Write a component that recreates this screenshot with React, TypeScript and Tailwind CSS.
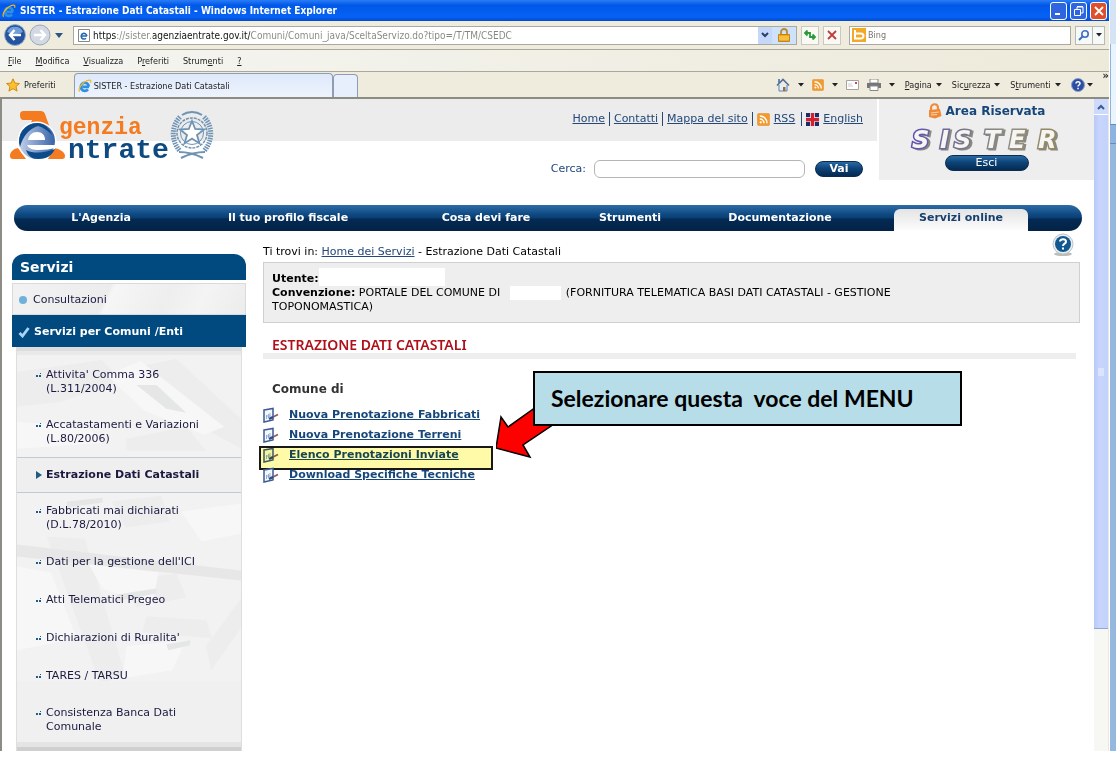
import type { ReactNode } from 'react'
import clsx from 'clsx'

const MENU = [
  ['', 'F', 'ile'],
  ['', 'M', 'odifica'],
  ['', 'V', 'isualizza'],
  ['P', 'r', 'eferiti'],
  ['Strum', 'e', 'nti'],
  ['', '?', ''],
]

const NAV = [
  { label: "L'Agenzia", className: '' },
  { label: 'Il tuo profilo fiscale', className: '' },
  { label: 'Cosa devi fare', className: '' },
  { label: 'Strumenti', className: '' },
  { label: 'Documentazione', className: 'pr-2.5' },
]

const SERVICES = [
  { lines: ["Attivita' Comma 336", '(L.311/2004)'] },
  { lines: ['Accatastamenti e Variazioni', '(L.80/2006)'] },
  { lines: ['Estrazione Dati Catastali'], active: true },
  { lines: ['Fabbricati mai dichiarati', '(D.L.78/2010)'] },
  { lines: ["Dati per la gestione dell'ICI"] },
  { lines: ['Atti Telematici Pregeo'] },
  { lines: ["Dichiarazioni di Ruralita'"] },
  { lines: ['TARES / TARSU'] },
  { lines: ['Consistenza Banca Dati', 'Comunale'] },
]

const ACTIONS = [
  { label: 'Nuova Prenotazione Fabbricati' },
  { label: 'Nuova Prenotazione Terreni' },
  { label: 'Elenco Prenotazioni Inviate', highlighted: true },
  { label: 'Download Specifiche Tecniche' },
]

function IeIcon({ className }: { className?: string }) {
  return (
    <svg viewBox="0 0 16 16" className={className} fill="none" aria-hidden="true">
      <path d="M12.6 9H5M12.4 8.6a4.6 4.6 0 1 0-1 3.2" stroke="#2f8fe0" strokeWidth="3" />
      <path d="M2 14.5C-.5 12 4 4.500 10 2c4-1.600 5.500-.5 4.300 2.300" stroke="#f3b81c" strokeWidth="1.400" />
    </svg>
  )
}

function RssIcon({ className }: { className?: string }) {
  return (
    <svg viewBox="0 0 14 14" className={className} fill="none" aria-hidden="true">
      <rect x=".5" y=".5" width="13" height="13" rx="1.500" fill="#f39a2e" stroke="#e9a04e" />
      <path d="M3 6.500A4.500 4.500 0 0 1 7.500 11M3 3.200A7.800 7.800 0 0 1 10.800 11" stroke="#fff" strokeWidth="1.600" />
      <circle cx="4" cy="10" r="1.200" fill="#fff" />
    </svg>
  )
}

function Caret() {
  return (
    <svg viewBox="0 0 6 4" className="h-1 w-1.5 shrink-0" aria-hidden="true">
      <path d="M0 0h6L3 3.500z" fill="#222" />
    </svg>
  )
}

function HelpIcon({ className }: { className?: string }) {
  return (
    <svg viewBox="0 0 22 24" className={className} aria-hidden="true">
      <ellipse cx="11" cy="21" rx="9" ry="2" fill="#bdbdb5" />
      <circle cx="11" cy="11" r="10" fill="#e9eef3" stroke="#b9c4ce" />
      <circle cx="11" cy="11" r="8" fill="#12588f" />
      <path d="M8 8.500C8 5.500 14 5.500 14 8.700c0 2-3 2-3 4.300M11 14.500v2" fill="none" stroke="#fff" strokeWidth="2" />
    </svg>
  )
}

function EditIcon() {
  return (
    <svg viewBox="0 0 16 16" className="size-4 shrink-0" fill="none" aria-hidden="true">
      <path d="M1 3l9-1.500v11.500l-9 2z" fill="#f4f8fc" stroke="#3c5a94" strokeWidth="1.500" />
      <path d="M3.500 8v4M5.500 7v4M3 9h4M7 6v4" stroke="#8fb0d0" />
      <path d="M7 11.500l8-4" stroke="#8b5a62" strokeWidth="1.800" />
      <path d="M6 12l4-2" stroke="#2b4b8d" strokeWidth="2.200" />
    </svg>
  )
}

function TitleBar() {
  const base = 'flex h-[18px] w-[17px] items-center justify-center rounded-[3px] border border-white'
  return (
    <div className="flex h-[21px] items-center bg-[linear-gradient(#2b7cf5,#0058e8_25%,#0662f6_80%,#0249cf)] pl-0.5 pr-0.5">
      <IeIcon className="size-3.5" />
      <h1 className="ml-1 flex-1 truncate text-[10px] font-bold text-white">
        SISTER - Estrazione Dati Catastali - Windows Internet Explorer
      </h1>
      <div className="flex gap-[3px]">
        <button aria-label="Riduci a icona" className={clsx(base, 'bg-[#2f66e0]')}>
          <svg viewBox="0 0 12 12" className="size-3"><path d="M2 9h5" stroke="#fff" strokeWidth="2" /></svg>
        </button>
        <button aria-label="Ripristina" className={clsx(base, 'bg-[#2f66e0]')}>
          <svg viewBox="0 0 12 12" className="size-3" fill="none" stroke="#fff">
            <path d="M4 4V2h6v6H8M4 1.500h6" />
            <path d="M1.500 4.500h6v6h-6z" />
          </svg>
        </button>
        <button aria-label="Chiudi" className={clsx(base, 'bg-[#df4f2b]')}>
          <svg viewBox="0 0 12 12" className="size-3"><path d="M2 2l8 8M10 2l-8 8" stroke="#fff" strokeWidth="1.800" /></svg>
        </button>
      </div>
    </div>
  )
}

function AddressBar() {
  const small = 'flex h-[19px] w-[18px] items-center justify-center border border-[#c9c9c4] bg-[#faf9f4]'
  return (
    <div className="flex h-[29px] items-center border-b border-[#aaa89c] pl-1 pr-1">
      <button aria-label="Indietro">
        <svg viewBox="0 0 22 22" className="size-[22px]">
          <circle cx="11" cy="11" r="10.500" fill="#24539f" stroke="#9bb0cc" />
          <path d="M3 8a8.500 8 0 0 1 16 0q-8 4-16 0z" fill="#6f9fd8" />
          <path d="M17 11H6M10.500 6L6 11l4.500 5" fill="none" stroke="#fff" strokeWidth="2.500" />
        </svg>
      </button>
      <button aria-label="Avanti" className="ml-[3px]">
        <svg viewBox="0 0 22 22" className="size-[22px]">
          <circle cx="11" cy="11" r="10" fill="#d3d9e3" stroke="#9ba8ba" />
          <path d="M5 11h11M11.500 6l4.500 5-4.500 5" fill="none" stroke="#fff" strokeWidth="2.500" />
        </svg>
      </button>
      <button aria-label="Pagine recenti" className="ml-1 mr-2.5">
        <svg viewBox="0 0 8 5" className="h-[5px] w-2"><path d="M0 0h8L4 5z" fill="#2b5687" /></svg>
      </button>
      <div className="flex h-[19px] flex-1 items-center border border-[#a9a9a2] bg-white pl-1">
        <svg viewBox="0 0 12 13" className="h-[13px] w-3" aria-hidden="true">
          <path d="M.5.5h11v12H.5z" fill="#fff" stroke="#888" />
          <path d="M9 7H3.500M8.800 7a2.800 2.800 0 1 0-.8 2.200" fill="none" stroke="#2469b3" strokeWidth="1.600" />
        </svg>
        <input
          aria-label="Indirizzo"
          className="ml-[3px] h-full min-w-0 flex-1 bg-[linear-gradient(90deg,#111_23px,#85857f_23px,#85857f_60px,#111_60px,#111_157px,#85857f_157px)] bg-clip-text text-[10px] text-transparent outline-none"
          defaultValue="https://sister.agenziaentrate.gov.it/Comuni/Comuni_java/SceltaServizo.do?tipo=/T/TM/CSEDC"
        />
        <button aria-label="Mostra indirizzi" className="flex h-full w-3.5 items-center justify-center bg-[#c6d8fa]">
          <svg viewBox="0 0 8 6" className="h-1.5 w-2"><path d="M1 1l3 3 3-3" fill="none" stroke="#28406b" strokeWidth="2" /></svg>
        </button>
        <button aria-label="Rapporto di protezione" className="flex h-full w-6 items-center justify-center bg-[#cfe2fb]">
          <svg viewBox="0 0 12 14" className="h-3.5 w-3">
            <path d="M3 7V4a3 3 0 0 1 6 0v3" fill="none" stroke="#c08a2a" strokeWidth="1.800" />
            <path d="M.5 6.500h11v7H.5z" fill="#eda81b" stroke="#c58416" />
            <path d="M1 9h10M1 11h10" stroke="#ffd66a" />
          </svg>
        </button>
      </div>
      <div className="ml-1 flex gap-1">
        <button aria-label="Aggiorna" className={small}>
          <svg viewBox="0 0 14 14" className="size-3.5" fill="none" stroke="#2b9a3b" strokeWidth="1.800">
            <path d="M7 8V5H2M4.500 2.500L2 5l2.500 2.500M7 6v3h5M9.500 6.500L12 9l-2.500 2.500" />
          </svg>
        </button>
        <button aria-label="Interrompi" className={small}>
          <svg viewBox="0 0 12 12" className="size-3"><path d="M2 2l8 8M10 2l-8 8" stroke="#c23b3b" strokeWidth="1.800" /></svg>
        </button>
      </div>
      <div className="ml-2 mr-1 flex h-[19px] w-[222px] items-center border border-[#a9a9a2] bg-white pl-0.5">
        <svg viewBox="0 0 14 14" className="size-3.5" aria-hidden="true">
          <path d="M0 0h14v14H0z" fill="#f2a929" />
          <path d="M3 2v8.500h6a2.500 2.500 0 0 0 0-5H3" fill="none" stroke="#fff" strokeWidth="2" />
        </svg>
        <input aria-label="Cerca con Bing" placeholder="Bing" className="ml-0.5 min-w-0 flex-1 text-[9px] outline-none placeholder:text-[#77756c]" />
      </div>
      <div className="flex h-[19px] border border-[#b9b9b4] bg-[#f7f8f8]">
        <button aria-label="Cerca" className="flex w-4 items-center justify-center">
          <svg viewBox="0 0 12 12" className="size-3" fill="none" stroke="#3e6fc0" strokeWidth="1.600">
            <circle cx="7" cy="5" r="3.200" />
            <path d="M4.500 7.500L1 11" strokeWidth="2" />
          </svg>
        </button>
        <button aria-label="Opzioni di ricerca" className="flex w-3 items-center justify-center border-l border-[#b9b9b4]">
          <Caret />
        </button>
      </div>
    </div>
  )
}

function Tool({ label, children }: { label: string; children: ReactNode }) {
  return (
    <button aria-label={label} className="flex items-center gap-2">
      {children}
    </button>
  )
}

function TabBar() {
  return (
    <div className="flex h-[27px] items-center border-b-2 border-[#8c8b84] pl-1.5">
      <button className="flex items-center gap-1">
        <svg viewBox="0 0 14 14" className="size-3.5" aria-hidden="true">
          <path d="M7 .8l1.900 4.300 4.600.4-3.500 3 1.100 4.600L7 10.700l-4.100 2.400L4 8.500l-3.500-3 4.600-.4z" fill="#fbc02d" stroke="#d18b12" />
        </svg>
        Preferiti
      </button>
      <div className="ml-[18px] flex h-full items-end">
        <button className="flex h-6 w-[259px] items-center gap-0.5 rounded-t-sm border border-b-0 border-[#8e9db5] bg-[linear-gradient(#dde8fa,#eef4fd)] pl-[3px]">
          <IeIcon className="size-3.5" />
          SISTER - Estrazione Dati Catastali
        </button>
        <button aria-label="Nuova scheda" className="h-[23px] w-[25px] rounded-t-sm border border-b-0 border-[#8e9db5] bg-[#e8effc]" />
      </div>
      <div className="ml-auto flex h-full items-center gap-2.5">
        <div className="flex items-center gap-2">
          <Tool label="Pagina iniziale">
            <svg viewBox="0 0 14 14" className="size-3.5" fill="none">
              <path d="M3 7v6h8V7" fill="#e6edf7" stroke="#5b82b8" />
              <path d="M1 7.500l6-6 6 6M3 1v4" stroke="#4f6f9c" strokeWidth="1.600" />
              <path d="M7 9h2.500v4H7z" fill="#9c6b3c" />
            </svg>
            <Caret />
          </Tool>
          <Tool label="Feed">
            <RssIcon className="size-3" />
            <Caret />
          </Tool>
          <Tool label="Posta">
            <svg viewBox="0 0 13 10" className="h-2.5 w-[13px]">
              <path d="M.5.5h12v9H.5z" fill="#fff" stroke="#a4a49e" />
              <path d="M9 2h2v2H9z" fill="#c45" />
              <path d="M2 4h4M2 6h5" stroke="#ccc" />
            </svg>
          </Tool>
          <Tool label="Stampa">
            <svg viewBox="0 0 14 12" className="h-3 w-3.5">
              <path d="M3 0h8v4H3z" fill="#fff" stroke="#888" />
              <path d="M0 4h14v5H0z" fill="#74767c" />
              <path d="M3 7h8v4.500H3z" fill="#fff" stroke="#888" />
            </svg>
            <Caret />
          </Tool>
        </div>
        <button className="flex items-center gap-1"><span><u>P</u>agina</span><Caret /></button>
        <button className="flex items-center gap-1"><span>Sic<u>u</u>rezza</span><Caret /></button>
        <button className="flex items-center gap-1"><span>S<u>t</u>rumenti</span><Caret /></button>
        <button aria-label="Guida" className="flex items-center gap-0.5">
          <svg viewBox="0 0 14 14" className="size-3.5">
            <circle cx="7" cy="7" r="6.500" fill="#2c4fa3" stroke="#8ba0d0" />
            <path d="M5 5.500C5 3 9 3 9 5.500 9 7 7 7 7 8.500M7 9.700v1.500" fill="none" stroke="#fff" strokeWidth="1.500" />
          </svg>
          <Caret />
        </button>
        <button aria-label="Altri comandi" className="self-start text-[11px] leading-2 font-bold">»</button>
      </div>
    </div>
  )
}

function BrandLogo() {
  return (
    <svg viewBox="0 0 206 58" className="h-[58px] w-[206px]" role="img" aria-label="Agenzia Entrate">
      <defs>
        <linearGradient id="e-fill" x1="0" x2="1">
          <stop offset="0" stopColor="#c3d0ea" />
          <stop offset="1" stopColor="#3763a8" />
        </linearGradient>
      </defs>
      <path d="M10 5c0-3 1-4 4-4h16c4 0 5 2 6 6l4 11-20-2 2-6h-8c-3 0-4-2-4-5z" fill="#f47b20" />
      <path d="M8 38c-5 1-8 4-8 8 0 2 1 3 3 3h13zM44 38c6 1 11 4 11 8 0 2-1 3-3 3H38z" fill="#f47b20" />
      <circle cx="27" cy="31" r="19.500" fill="#fff" />
      <circle cx="27" cy="31" r="18" fill="url(#e-fill)" />
      <path d="M27 13a18 18 0 0 0-17 24c3-11 9-18 18-21 7 2 11 6 14 9-2-7-8-12-15-12z" fill="#0d4a89" />
      <path d="M18 30c1-5 4-8 9-8s8 3 8 8z" fill="#fff" />
      <path d="M16 40c8 4 19 3 29-1-3 7-9 10-17 10-6 0-10-3-12-9z" fill="#0d4a89" />
      <path d="M17 35c2 4 6 5 12 5 6 0 12-1 16-2v-3z" fill="#fff" />
      <g fontFamily="'Liberation Mono', monospace" fontWeight="bold">
        <text x="49" y="24" fill="#f47b20" fontSize="23">genzia</text>
        <text x="58" y="48" fill="#0d4a80" fontSize="28">ntrate</text>
      </g>
      <g fill="none" stroke="#6f93b3">
        <circle cx="182" cy="23" r="15" strokeWidth="1.500" strokeDasharray="3 1" />
        <circle cx="182" cy="23" r="11.500" />
        <path d="M170 7c-9 9-9 24 0 34M194 7c9 9 9 24 0 34" strokeWidth="5" strokeDasharray="1.500 1" />
        <path d="M169 42c8 0 18 3 24 6M195 42c-8 0-18 3-24 6M172 5c6-4 14-4 20 0" strokeWidth="2" />
        <path d="M182 11l3.200 8 8.800.500-7 5.500 2.500 8.500-7.500-5-7.500 5L177 25l-7-5.500 8.800-.5z" fill="#fff" strokeWidth="1.800" />
      </g>
    </svg>
  )
}

function SisterLogo() {
  return (
    <svg viewBox="0 0 156 36" className="h-9 w-[156px] drop-shadow-[2px_1px_0_#8a8880]" role="img" aria-label="SISTER">
      <defs>
        <linearGradient id="chrome" x1="0" x2="156" gradientUnits="userSpaceOnUse">
          <stop offset="0" stopColor="#5a50b8" />
          <stop offset=".35" stopColor="#77778c" />
          <stop offset=".65" stopColor="#918f84" />
          <stop offset="1" stopColor="#958756" />
        </linearGradient>
      </defs>
      <text
        x="3 31 45 75 100 129"
        y="29"
        fontFamily="'DejaVu Sans', sans-serif"
        fontSize="24"
        fontWeight="bold"
        fontStyle="italic"
        fill="#f7f5f2"
        stroke="url(#chrome)"
        strokeWidth="3"
        paintOrder="stroke"
      >
        SISTER
      </text>
    </svg>
  )
}

const LINK = 'text-[#24487a] underline'
const PILL = 'rounded-full border border-[#0a2c50] bg-[linear-gradient(#2a6aa5,#0d4478_45%,#042a52)] text-white'

function SiteHeader() {
  return (
    <header className="flex">
      <div className="flex flex-1 justify-between bg-[linear-gradient(#ececec_42px,white_42px)] pl-2 pr-3.5">
        <div className="pt-[11px]">
          <BrandLogo />
        </div>
        <div className="flex flex-col items-end">
          <div className="flex h-10 items-center gap-1">
            <a href="#" className={LINK}>Home</a>
            <span className="h-3.5 w-px bg-[#24487a]" />
            <a href="#" className={LINK}>Contatti</a>
            <span className="h-3.5 w-px bg-[#24487a]" />
            <a href="#" className={LINK}>Mappa del sito</a>
            <span className="h-3.5 w-px bg-[#24487a]" />
            <RssIcon className="size-[13px]" />
            <a href="#" className={LINK}>RSS</a>
            <span className="ml-0.5 h-3.5 w-px bg-[#24487a]" />
            <svg viewBox="0 0 14 14" className="size-[13px]" aria-hidden="true">
              <path d="M0 0h14v14H0z" fill="#1f2b66" />
              <path d="M7 0v14M0 7h14" stroke="#fff" strokeWidth="5" />
              <path d="M7 0v14M0 7h14" stroke="#d3202f" strokeWidth="3.500" />
            </svg>
            <a href="#" className={LINK}>English</a>
          </div>
          <form className="mt-[21px] flex items-center text-[#24487a]">
            <label htmlFor="cerca">Cerca:</label>
            <input id="cerca" className="ml-2 h-[18px] w-[211px] rounded-md border border-[#b5b5b5] bg-white px-2 outline-none" />
            <button type="button" className={clsx(PILL, 'ml-2.5 h-4 w-12 leading-[14px] font-bold')}>Vai</button>
          </form>
        </div>
      </div>
      <div className="ml-0.5 flex h-[81px] w-[215px] flex-col items-center bg-[#eeeeee] pt-1">
        <div className="flex items-center gap-1 text-xs leading-4 font-bold text-[#17477a]">
          <svg viewBox="0 0 14 16" className="h-4 w-3.5" aria-hidden="true">
            <path d="M3 8V5c0-5 7-5 7 0v3" fill="none" stroke="#ef8b3a" strokeWidth="2.200" />
            <path d="M1 7l11-1 1.500 7L7 15.500 1 14z" fill="#ee8a37" />
            <path d="M3 10l8-1M3 12l6-.5" stroke="#ffd2a8" />
          </svg>
          Area Riservata
        </div>
        <SisterLogo />
        <button className={clsx(PILL, 'h-4 w-[84px] leading-[14px]')}>Esci</button>
      </div>
    </header>
  )
}

function MainNav() {
  return (
    <nav className="ml-3 mr-3 mt-[25px] grid h-[26px] grid-cols-[174fr_200fr_196fr_92fr_218fr_134fr_54fr] rounded-full bg-[linear-gradient(#2e6ca6,#0f4a83_35%,#0a3f74_48%,#042a54_55%,#032346)] font-bold text-white">
      {NAV.map((item) => (
        <a key={item.label} href="#" className={clsx('flex items-center justify-center whitespace-nowrap', item.className)}>
          {item.label}
        </a>
      ))}
      <a href="#" aria-current="page" className="mt-1 flex items-center justify-center rounded-t-md bg-[linear-gradient(#e4e4e4,#fdfdfd)] pb-1 text-[#17406f]">
        Servizi online
      </a>
    </nav>
  )
}

// Washed-out aerial view of roofs and streets behind the menu entries.
function AerialBackdrop() {
  return (
    <svg viewBox="0 0 225 405" preserveAspectRatio="none" className="h-full w-full [grid-area:1/1]" aria-hidden="true">
      <path d="M0 0h225v405H0z" fill="#f2f2f3" />
      <path d="M0 0h225v4H0z" fill="#dcdcdc" />
      <path d="M0 4h225v4H0z" fill="#e9e9e9" />
      <g fill="#ededee">
        <path d="M0 25l85-12 20 20-60 22-45 5zM120 20l40-8 65 60v30l-40-22-35-10zM110 92l60-12 20 24h-80z" />
        <path d="M30 190l38 2 40 135-24 12zM95 155l50-6 8 26-44 6z" />
        <path d="M105 235l55-8 10 24-50 10zM190 300l35-48v30l-30 42zM130 270l60 4 6 18-70-6z" />
      </g>
      <path d="M0 198l225 26v10L0 210z" fill="#e7e7e8" />
      <g fill="#f7f7f7">
        <path d="M90 28l34-14 84 66-20 8-60-24zM0 75l70 5 18 16-88 6zM72 218l70 8-6 34-50-18z" />
        <path d="M0 220l34 6 26 66-60 12zM110 300l60-6-14 30-50 8zM165 165l60-8v30l-40 8z" />
      </g>
      <path d="M100 248l40-6v5l-40 8zM150 298l24-4v5l-22 5zM50 155l36-4v5l-36 5zM120 38l30 24 20 4-30-28z" fill="#e5e6e6" />
      <path d="M0 335h225v70H0z" fill="#f0f0f0" />
      <path d="M0 396h225v9H0z" fill="#e4e4e4" />
      <path d="M0 401h225v4H0z" fill="#cfcfcf" />
    </svg>
  )
}

function Sidebar() {
  return (
    <aside className="w-[234px] shrink-0 text-[#1a1a40]">
      <h2 className="h-[26px] rounded-t-xl bg-[#004a80] pl-2 text-sm leading-[26px] font-bold text-white">Servizi</h2>
      <a href="#" className="mt-[3px] flex h-8 items-center gap-1.5 border border-[#dadada] bg-[linear-gradient(115deg,#f2f2f2_0,#ececec_40%,#f6f6f6_42%,#eeeeee_65%,#f4f4f4_80%,#ececec)] pt-0.5 pl-1.5">
        <span className="size-2 rounded-full bg-[#6fb0dd]" />
        Consultazioni
      </a>
      <a href="#" className="flex h-8 items-center gap-1 bg-[#004a80] pt-0.5 pl-1.5 font-bold text-white">
        <svg viewBox="0 0 12 12" className="size-3" aria-hidden="true">
          <path d="M1.500 7l3 3L10.500 2" fill="none" stroke="#a9d4f5" strokeWidth="2.800" />
        </svg>
        Servizi per Comuni /Enti
      </a>
      <div className="mx-1 grid border-x border-[#dedede]">
        <AerialBackdrop />
        <ul className="pt-2.5 pb-1.5 leading-[14px] [grid-area:1/1]">
          {SERVICES.map(({ lines, active }) => (
            <li key={lines[0]} className={clsx(active && 'border-y border-[#bccbd9] bg-[#efefef] font-bold')}>
              <a
                href="#"
                className={clsx(
                  'flex gap-1 pl-[19px]',
                  active && 'py-2.5',
                  !active && (lines.length > 1 ? 'py-[11px]' : 'py-3'),
                )}
              >
                <svg viewBox="0 0 6 14" className="h-3.5 w-1.5 shrink-0" fill="#1f5c83" aria-hidden="true">
                  {active ? <path d="M0 3l6 4-6 4z" /> : <path d="M0 7h2v2H0zM3 7h2v2H3zM4 5h1v1H4z" />}
                </svg>
                <span className="flex flex-col">
                  {lines.map((line) => (
                    <span key={line}>{line}</span>
                  ))}
                </span>
              </a>
            </li>
          ))}
        </ul>
      </div>
    </aside>
  )
}

function Callout() {
  return (
    <div className="absolute -top-[74px] left-[233px] h-[90px] w-[466px]">
      <svg viewBox="0 0 90 90" className="absolute top-0 left-0 size-[90px]" aria-hidden="true">
        <path d="M0 77l5-31 7 10 28-20 30 9-43 29 7 12z" fill="#fe0000" stroke="#000" strokeWidth="1.500" />
      </svg>
      <p className="absolute top-0 left-[37px] w-[429px] whitespace-pre border-2 border-black bg-[#b7dde8] py-2.5 pl-4 font-['Lato',sans-serif] text-[23px] leading-[31px] font-bold text-black">
        Selezionare questa  voce del MENU
      </p>
    </div>
  )
}

function Content() {
  return (
    <main className="min-w-0 flex-1 text-black">
      <div className="flex items-start justify-between pr-1.5">
        <p className="pt-3.5">
          Ti trovi in: <a href="#" className={LINK}>Home dei Servizi</a> - Estrazione Dati Catastali
        </p>
        <a href="#" aria-label="Aiuto" className="pt-0.5">
          <HelpIcon className="h-6 w-[22px]" />
        </a>
      </div>
      <div className="mt-[3px] h-[61px] border border-[#cfcfcf] bg-[#eeeeee] px-2 pt-[9px]">
        <div className="flex h-[14px]"><b>Utente:</b><span className="-mt-1 h-[18px] w-[126px] bg-white" /></div>
        <p>
          <b>Convenzione:</b> PORTALE DEL COMUNE DI
          <span className="ml-2.5 mr-px inline-block h-[14px] w-[51px] bg-white align-top" />
          {' '}(FORNITURA TELEMATICA BASI DATI CATASTALI - GESTIONE
          <br />
          TOPONOMASTICA)
        </p>
      </div>
      <h2 className="mr-1 mt-[13px] border-b-[6px] border-[#eeeeee] pl-[9px] font-['Noto_Sans',sans-serif] text-sm leading-[17px] font-semibold text-[#b0101a]">
        ESTRAZIONE DATI CATASTALI
      </h2>
      <h3 className="mt-[22px] pl-[9px] text-xs leading-4 font-bold text-[#333]">Comune di</h3>
      <ul className="mt-2">
        {ACTIONS.map(({ label, highlighted }) => (
          <li key={label} className="relative flex h-5 items-center gap-2.5">
            <EditIcon />
            <a href="#" className="font-bold text-[#17477a] underline">{label}</a>
            {highlighted && (
              <>
                <span className="pointer-events-none absolute top-px -left-1 h-6 w-[234px] border-2 border-black bg-[#fffa9e] opacity-90 mix-blend-multiply" />
                <Callout />
              </>
            )}
          </li>
        ))}
      </ul>
    </main>
  )
}

function Scrollbar() {
  return (
    <div className="flex w-[15px] shrink-0 flex-col border-r border-[#eee6dd] bg-[#f7f7f3]" aria-hidden="true">
      <div className="flex h-4 items-center justify-center border-b border-white bg-[#cddafc]">
        <svg viewBox="0 0 8 6" className="h-1.5 w-2"><path d="M1 5l3-3 3 3" fill="none" stroke="#3d5a94" strokeWidth="2" /></svg>
      </div>
      <div className="flex flex-[515] items-center justify-center border-b border-[#8ea6d8] bg-[linear-gradient(90deg,#b9c9f6,#c8d6fe_40%,#c3d2fb)]">
        <svg viewBox="0 0 6 8" className="h-2 w-1.5"><path d="M0 1h6M0 3h6M0 5h6M0 7h6" stroke="#eef3ff" /></svg>
      </div>
      <div className="flex-[122]" />
    </div>
  )
}

export default function App() {
  return (
    <div className="min-h-screen bg-white">
      <div className="flex bg-[#94b8de]">
        <div className="min-w-0 flex-1 border-r border-white">
          <div className="bg-[#efecdd] font-['DejaVu_Sans_Condensed','DejaVu_Sans',sans-serif] text-[9px] leading-3 text-[#222]">
            <TitleBar />
            <AddressBar />
            <div className="flex h-[22px] items-center gap-3.5 border-b border-[#aaa89c] bg-[linear-gradient(90deg,#f5f5f2,#edeada)] pl-2">
              {MENU.map(([before, key, after]) => (
                <button key={before + key + after}>{before}<u>{key}</u>{after}</button>
              ))}
            </div>
            <TabBar />
          </div>
          <div className="flex border-l-2 border-[#8c8b84] bg-white font-['DejaVu_Sans',sans-serif] text-[11px] leading-[14px]">
            <div className="min-w-0 flex-1">
              <SiteHeader />
              <MainNav />
              <div className="flex gap-[17px] pl-2.5 pr-3.5">
                <div className="pt-[23px]">
                  <Sidebar />
                </div>
                <Content />
              </div>
            </div>
            <Scrollbar />
          </div>
        </div>
        {/* edge of the window behind */}
        <div className="flex w-[6px] shrink-0 flex-col">
          <div className="h-11 bg-[#d5e3f5]" />
          <div className="h-20 border-l border-[#8fb3dc] bg-[#e9f4fd]" />
          <div className="h-5 border-y border-[#5f8ec4] bg-[#8db4e0]" />
        </div>
      </div>
    </div>
  )
}
